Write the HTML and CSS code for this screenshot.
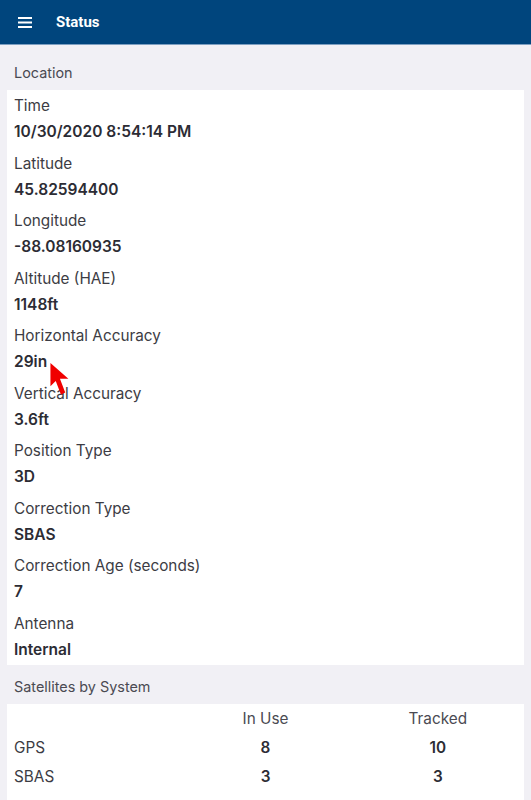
FILE: index.html
```html
<!DOCTYPE html>
<html>
<head>
  <title>Status</title>
  <link rel="stylesheet" href="styles.css">
</head>
<body>
  <header class="topbar">
    <svg class="menu-icon" width="14" height="11" viewBox="0 0 14 11">
      <rect x="0" y="0" width="14" height="2" fill="#fff"/>
      <rect x="0" y="4.5" width="14" height="2" fill="#fff"/>
      <rect x="0" y="9" width="14" height="2" fill="#fff"/>
    </svg>
    <span class="title">Status</span>
  </header>

  <div class="section-title">Location</div>
  <div class="card fields">
    <div class="field"><div class="label">Time</div><div class="value">10/30/2020 8:54:14 PM</div></div>
    <div class="field"><div class="label">Latitude</div><div class="value">45.82594400</div></div>
    <div class="field"><div class="label">Longitude</div><div class="value">-88.08160935</div></div>
    <div class="field"><div class="label">Altitude (HAE)</div><div class="value">1148ft</div></div>
    <div class="field"><div class="label">Horizontal Accuracy</div><div class="value">29in</div></div>
    <div class="field"><div class="label">Vertical Accuracy</div><div class="value">3.6ft</div></div>
    <div class="field"><div class="label">Position Type</div><div class="value">3D</div></div>
    <div class="field"><div class="label">Correction Type</div><div class="value">SBAS</div></div>
    <div class="field"><div class="label">Correction Age (seconds)</div><div class="value">7</div></div>
    <div class="field"><div class="label">Antenna</div><div class="value">Internal</div></div>
  </div>

  <div class="section-title second">Satellites by System</div>
  <div class="card sats">
    <div class="cell"></div>
    <div class="cell head">In Use</div>
    <div class="cell head">Tracked</div>
    <div class="cell name">GPS</div>
    <div class="cell num">8</div>
    <div class="cell num">10</div>
    <div class="cell name">SBAS</div>
    <div class="cell num">3</div>
    <div class="cell num">3</div>
  </div>

  <!-- mouse pointer captured in the screenshot -->
  <svg class="cursor" width="24" height="38" viewBox="0 0 22 36">
    <polygon points="1,0 1,22 6,17 11,30 15,28 10,15 18,15" fill="#f00000"/>
  </svg>
</body>
</html>
```

FILE: styles.css
```css
body {
  margin: 0;
  background-color: #f1f0f5;
  font-family: Inter, Roboto, "Liberation Sans", sans-serif;
  color: #3a3a42;
  height: 800px;
  overflow: hidden;
}
.topbar {
  height: 44px;
  background-color: #00457d;
  border-bottom: 1px solid #7d9fc1;
  display: flex;
  align-items: center;
  padding-left: 18px;
}
.menu-icon {
  margin-top: 1px;
}
.title {
  color: #fff;
  font-family: Roboto, "Liberation Sans", sans-serif;
  font-weight: bold;
  font-size: 15px;
  margin-left: 24px;
}
.section-title {
  font-size: 14.4px;
  line-height: 22px;
  color: #4a4a52;
  padding: 17px 14px 6px;
}
.section-title.second {
  padding-top: 11px;
}
.card {
  background-color: #fff;
  margin: 0 7px;
}
.fields {
  padding: 5px 7px 4px;
  display: flex;
  flex-direction: column;
  gap: 9.5px;
}
.label {
  font-size: 15.3px;
  line-height: 22px;
  color: #3c3c44;
  margin-bottom: 4px;
}
.value {
  font-size: 15.5px;
  line-height: 22px;
  font-weight: 600;
  color: #2c2c34;
}
.sats {
  display: grid;
  grid-template-columns: 1fr 1fr 1fr;
  row-gap: 7px;
  padding: 4px 0 20px;
}
.cell {
  font-size: 15.3px;
  line-height: 22px;
}
.head {
  text-align: center;
  color: #4a4a52;
}
.name {
  padding-left: 7px;
  color: #3c3c44;
}
.num {
  text-align: center;
  font-weight: 600;
  color: #2c2c34;
}
.cursor {
  position: absolute;
  left: 49px;
  top: 363px;
}
```
